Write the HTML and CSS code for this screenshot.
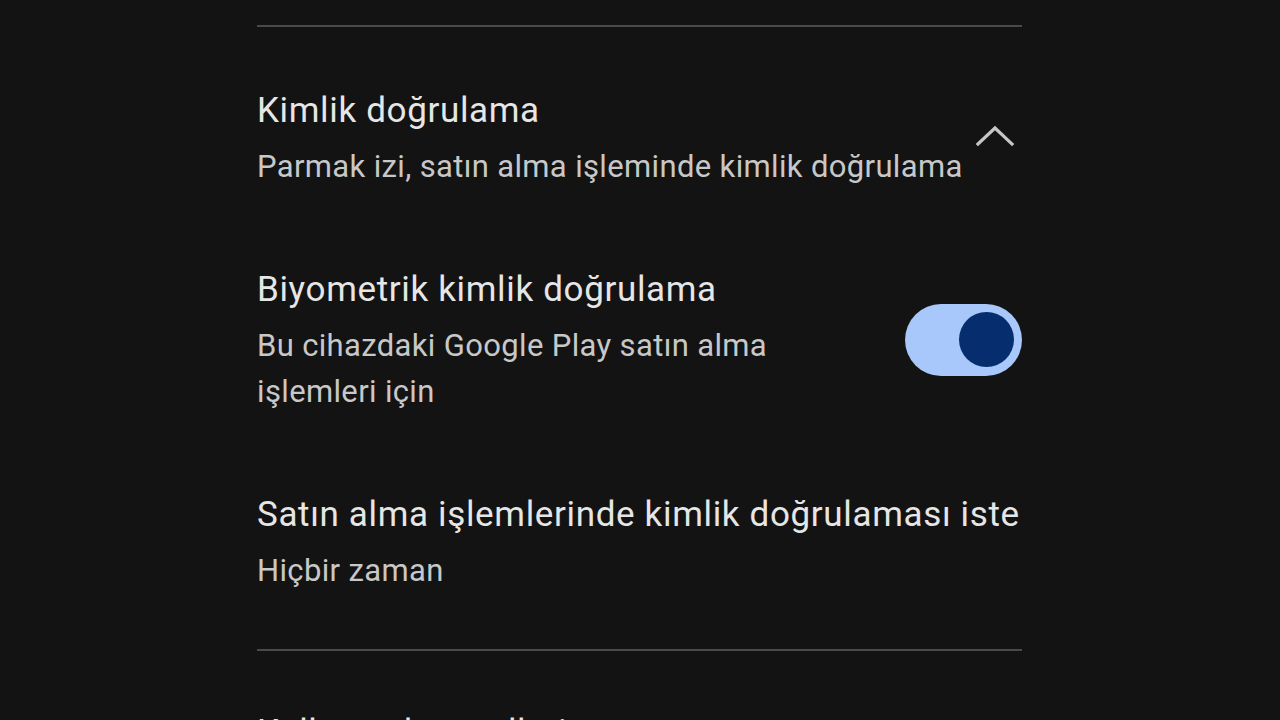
FILE: index.html
```html
<!DOCTYPE html>
<html lang="tr">
<head>
<meta charset="utf-8">
<link rel="stylesheet" href="styles.css">
</head>
<body>
<main class="page">
  <div class="divider divider-top"></div>
  <section class="list">
    <div class="item">
      <div class="text">
        <div class="title">Kimlik doğrulama</div>
        <div class="sub">Parmak izi, satın alma işleminde kimlik doğrulama</div>
      </div>
      <svg class="chevron" width="40" height="24" viewBox="0 0 40 24">
        <polyline points="3,20 20,4 37,20" fill="none" stroke="#c4c7c5" stroke-width="3.2" stroke-linecap="square"/>
      </svg>
    </div>
    <div class="item">
      <div class="text narrow">
        <div class="title">Biyometrik kimlik doğrulama</div>
        <div class="sub">Bu cihazdaki Google Play satın alma işlemleri için</div>
      </div>
      <div class="toggle"><div class="knob"></div></div>
    </div>
    <div class="item">
      <div class="text">
        <div class="title">Satın alma işlemlerinde kimlik doğrulaması iste</div>
        <div class="sub">Hiçbir zaman</div>
      </div>
    </div>
  </section>
  <div class="divider"></div>
  <section class="next">
    <div class="title">Kullanıcı kontrolleri</div>
  </section>
</main>
</body>
</html>
```

FILE: styles.css
```css
html, body {
  margin: 0;
  padding: 0;
  background: #131313;
  height: 720px;
  overflow: hidden;
}
.page {
  width: 765px;
  margin-left: 257px;
  font-family: Roboto, "Noto Sans", sans-serif;
}
.divider {
  height: 2px;
  background: #4a4a4a;
}
.divider-top {
  margin-top: 25px;
}
.list {
  padding-top: 23px;
  margin-bottom: 16px;
}
.item {
  display: flex;
  align-items: center;
  justify-content: space-between;
  padding: 39px 0;
}
.text {
  display: flex;
  flex-direction: column;
  gap: 11px;
}
.narrow {
  width: 560px;
}
.title {
  color: #e6e6e6;
  font-size: 35px;
  line-height: 44px;
  letter-spacing: 0.65px;
  white-space: nowrap;
}
.sub {
  color: #c8c8c8;
  font-size: 31px;
  line-height: 46px;
  letter-spacing: 0.35px;
}
.chevron {
  margin-right: 7px;
  margin-top: -8px;
}
.toggle {
  width: 117px;
  height: 72px;
  border-radius: 36px;
  background: #a8c7fa;
  display: flex;
  align-items: center;
  justify-content: flex-end;
  padding-right: 8px;
  box-sizing: border-box;
  margin-top: -4px;
}
.knob {
  width: 55px;
  height: 55px;
  border-radius: 50%;
  background: #062e6f;
}
.next {
  padding-top: 60px;
}
```
